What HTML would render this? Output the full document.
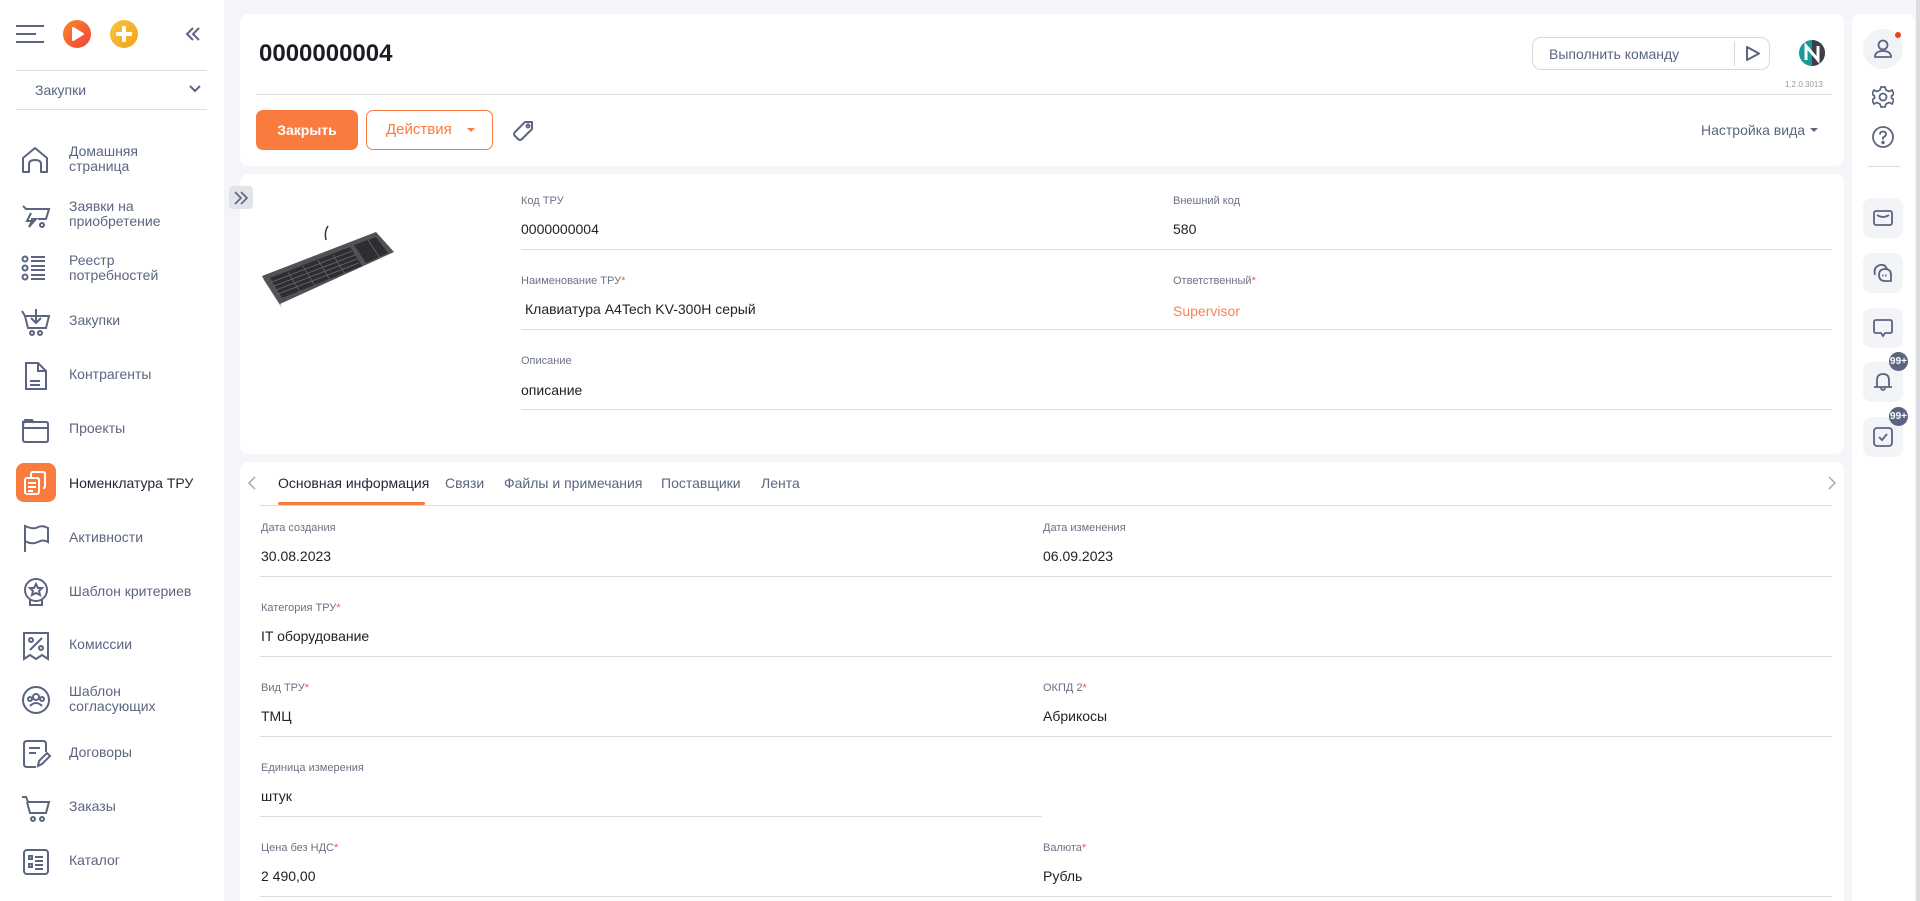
<!DOCTYPE html>
<html><head><meta charset="utf-8"><style>
*{box-sizing:border-box;margin:0;padding:0}
html,body{width:1920px;height:901px;overflow:hidden}
body{background:#f4f5f9;font-family:"Liberation Sans",sans-serif;position:relative;color:#222}
.a{position:absolute}
.side{left:0;top:0;width:224px;height:901px;background:#fff}
.nav{position:absolute;left:0;width:224px;height:44px}
.nav svg{position:absolute;left:20px;top:8px}
.nav .t{position:absolute;left:69px;font-size:14px;color:#5b6580;line-height:15px}
.card{background:#fff;border-radius:8px}
.lbl{position:absolute;font-size:11px;color:#6b7285}
.lbl i{color:#f05a3e;font-style:normal}
.val{position:absolute;font-size:14px;color:#222}
.hl{position:absolute;height:1px;background:#dcdde3}
.rb{position:absolute;left:1863px;width:40px;height:40px;border-radius:9px;background:#f3f4f8}
.rb svg{position:absolute;left:10px;top:10px}
.badge{position:absolute;left:1889px;width:19px;height:19px;border-radius:50%;background:#5b6580;color:#fff;font-size:10px;font-weight:bold;line-height:19px;text-align:center;overflow:hidden}
</style></head><body>
<div class="a side">
 <svg class="a" style="left:16px;top:24px" width="28" height="20"><g stroke="#5b6580" stroke-width="2"><line x1="0" y1="2" x2="28" y2="2"/><line x1="0" y1="10" x2="20" y2="10"/><line x1="0" y1="18" x2="28" y2="18"/></g></svg>
 <div class="a" style="left:63px;top:20px;width:28px;height:28px;border-radius:50%;background:linear-gradient(135deg,#f78a2a,#f2413a)"></div>
 <svg class="a" style="left:71px;top:26px" width="14" height="16"><path d="M2 2 L12 8 L2 14Z" fill="#fff" stroke="#fff" stroke-linejoin="round" stroke-width="2"/></svg>
 <div class="a" style="left:110px;top:20px;width:28px;height:28px;border-radius:50%;background:linear-gradient(135deg,#fbc43c,#f2a21c)"></div>
 <div class="a" style="left:116px;top:32px;width:16px;height:4px;background:#fff;border-radius:1px"></div>
 <div class="a" style="left:122px;top:26px;width:4px;height:16px;background:#fff;border-radius:1px"></div>
 <svg class="a" style="left:185px;top:26px" width="16" height="16"><path d="M8 2 L2 8 L8 14 M14 2 L8 8 L14 14" fill="none" stroke="#5b6580" stroke-width="2"/></svg>
 <div class="hl" style="left:16px;top:70px;width:191px"></div>
 <div class="a" style="left:35px;top:82px;font-size:14px;color:#5b6580">Закупки</div>
 <svg class="a" style="left:188px;top:84px" width="14" height="10"><path d="M2 2 L7 7 L12 2" fill="none" stroke="#5b6580" stroke-width="2"/></svg>
 <div class="hl" style="left:16px;top:109px;width:191px"></div>

 <div class="nav" style="top:136px"><svg width="32" height="32" fill="none" stroke="#5b6580" stroke-width="2"><path d="M3 28 V14 L15 4 L27 14 V28 H21 V20 Q21 16 15 16 Q9 16 9 20 V28 Z" stroke-linejoin="round"/></svg><div class="t" style="top:8px">Домашняя<br>страница</div></div>
 <div class="nav" style="top:191px"><svg width="32" height="32" fill="none" stroke="#5b6580" stroke-width="2"><path d="M3 7 L6 10 H29 L26 20 H18 M11 14 L7 22 H12 L9 28 L16 20 H11"/><circle cx="22" cy="26" r="2"/></svg><div class="t" style="top:8px">Заявки на<br>приобретение</div></div>
 <div class="nav" style="top:245px"><svg width="32" height="32" fill="none" stroke="#5b6580" stroke-width="2"><circle cx="5" cy="6" r="2.5"/><circle cx="5" cy="15" r="2.5"/><circle cx="5" cy="24" r="2.5"/><path d="M11 4H25M11 8H25M11 13H25M11 17H25M11 22H25M11 26H25"/></svg><div class="t" style="top:8px">Реестр<br>потребностей</div></div>
 <div class="nav" style="top:298px"><svg width="32" height="32" fill="none" stroke="#5b6580" stroke-width="2"><path d="M2 5 L5 10 H29 L26 22 H8 L5 10 M16 3 V17 M11 12 L16 17 L21 12"/><circle cx="12" cy="27" r="2"/><circle cx="20" cy="27" r="2"/></svg><div class="t" style="top:15px">Закупки</div></div>
 <div class="nav" style="top:352px"><svg width="32" height="32" fill="none" stroke="#5b6580" stroke-width="2"><path d="M6 3 H18 L26 11 V29 H6 Z M10 21 H20 M10 25 H20 M18 3 V11 H26"/></svg><div class="t" style="top:15px">Контрагенты</div></div>
 <div class="nav" style="top:406px"><svg width="32" height="32" fill="none" stroke="#5b6580" stroke-width="2"><path d="M3 8 H26 Q28 8 28 10 V26 Q28 28 26 28 H6 Q3 28 3 26 Z M3 14 Q3 8 5 6 H12 L14 9"/><path d="M3 14 H28"/></svg><div class="t" style="top:15px">Проекты</div></div>
 <div class="a" style="left:16px;top:463px;width:40px;height:39px;border-radius:8px;background:#f97b3d"></div>
 <svg class="a" style="left:22px;top:469px" width="28" height="28" fill="none" stroke="#fff" stroke-width="2"><rect x="3" y="9" width="14" height="16" rx="2"/><path d="M9 9 V5 Q9 3 11 3 H21 Q23 3 23 5 V17 Q23 19 21 19 M6 14 H14 M6 18 H14 M6 22 H11"/></svg>
 <div class="a" style="left:69px;top:475px;font-size:14px;color:#1f2533">Номенклатура ТРУ</div>
 <div class="nav" style="top:515px"><svg width="32" height="32" fill="none" stroke="#5b6580" stroke-width="2"><path d="M5 29 V3 Q14 7 18 4 Q23 2 28 5 V19 Q23 16 18 19 Q12 22 5 18"/></svg><div class="t" style="top:15px">Активности</div></div>
 <div class="nav" style="top:569px"><svg width="32" height="32" fill="none" stroke="#5b6580" stroke-width="2"><circle cx="16" cy="13" r="11"/><path d="M16 7 L18 11 H22 L19 14 L20 18 L16 16 L12 18 L13 14 L10 11 H14 Z M10 22 V28 H22 V22"/></svg><div class="t" style="top:15px">Шаблон критериев</div></div>
 <div class="nav" style="top:622px"><svg width="32" height="32" fill="none" stroke="#5b6580" stroke-width="2"><path d="M4 3 H28 V29 L22 25 L16 29 L10 25 L4 29 Z M10 20 L22 8"/><circle cx="11" cy="10" r="2"/><circle cx="21" cy="18" r="2"/></svg><div class="t" style="top:15px">Комиссии</div></div>
 <div class="nav" style="top:676px"><svg width="32" height="32" fill="none" stroke="#5b6580" stroke-width="2"><circle cx="16" cy="16" r="13"/><circle cx="16" cy="13" r="3"/><circle cx="10" cy="15" r="2"/><circle cx="22" cy="15" r="2"/><path d="M10 22 Q16 16 22 22"/></svg><div class="t" style="top:8px">Шаблон<br>согласующих</div></div>
 <div class="nav" style="top:730px"><svg width="32" height="32" fill="none" stroke="#5b6580" stroke-width="2"><path d="M26 14 V6 Q26 3 23 3 H7 Q4 3 4 6 V26 Q4 29 7 29 H16 M9 10 H20 M9 15 H16 M18 28 L19 23 L27 15 L30 18 L22 26 Z"/></svg><div class="t" style="top:15px">Договоры</div></div>
 <div class="nav" style="top:784px"><svg width="32" height="32" fill="none" stroke="#5b6580" stroke-width="2"><path d="M2 5 H6 L8 10 H29 L26 21 H10 L7 10"/><circle cx="13" cy="27" r="2"/><circle cx="22" cy="27" r="2"/></svg><div class="t" style="top:15px">Заказы</div></div>
 <div class="nav" style="top:838px"><svg width="32" height="32" fill="none" stroke="#5b6580" stroke-width="2"><rect x="4" y="4" width="24" height="24" rx="3"/><rect x="9" y="10" width="3" height="3"/><rect x="9" y="18" width="3" height="3"/><path d="M15 11 H23 M15 15 H23 M15 19 H23 M15 23 H23"/></svg><div class="t" style="top:15px">Каталог</div></div>
</div>

<!-- header card -->
<div class="a card" style="left:240px;top:14px;width:1604px;height:152px"></div>
<div class="a" style="left:259px;top:40px;font-size:24px;font-weight:bold;color:#1a1d26">0000000004</div>
<div class="hl" style="left:256px;top:94px;width:1576px"></div>
<div class="a" style="left:256px;top:110px;width:102px;height:40px;border-radius:7px;background:#f97b3d;color:#fff;font-size:14px;font-weight:bold;text-align:center;line-height:40px">Закрыть</div>
<div class="a" style="left:366px;top:110px;width:127px;height:40px;border-radius:7px;border:1px solid #f97b3d;color:#f97b3d;font-size:15px;line-height:38px;padding-left:19px">Действия</div>
<div class="a" style="left:467px;top:128px;border-left:4px solid transparent;border-right:4px solid transparent;border-top:4px solid #f97b3d"></div>
<svg class="a" style="left:512px;top:119px" width="24" height="24" fill="none" stroke="#5b6580" stroke-width="2"><path d="M13 3 H20 V10 L10 20 Q8 22 6 20 L3 17 Q1 15 3 13 Z" stroke-linejoin="round"/><circle cx="16" cy="7" r="1.5"/></svg>
<div class="a" style="left:1532px;top:37px;width:238px;height:33px;border:1px solid #d6d8df;border-radius:9px"></div>
<div class="a" style="left:1549px;top:46px;font-size:14px;color:#5b6580">Выполнить команду</div>
<div class="a" style="left:1734px;top:41px;width:1px;height:25px;background:#d6d8df"></div>
<svg class="a" style="left:1745px;top:45px" width="16" height="17"><path d="M2 2 L14 8.5 L2 15Z" fill="none" stroke="#5b6580" stroke-width="2" stroke-linejoin="round"/></svg>
<svg class="a" style="left:1799px;top:40px" width="26" height="26"><circle cx="13" cy="13" r="13" fill="#149c9a"/><path d="M13 0 A13 13 0 0 1 13 26 Z" fill="#3d3f46"/><path d="M7 20 V6 L19 20 V6" fill="none" stroke="#fff" stroke-width="3"/></svg>
<div class="a" style="left:1785px;top:80px;font-size:8px;color:#999">1.2.0.3013</div>
<div class="a" style="left:1701px;top:122px;font-size:14px;color:#5b6580">Настройка вида</div>
<div class="a" style="left:1810px;top:128px;border-left:4px solid transparent;border-right:4px solid transparent;border-top:4px solid #5b6580"></div>

<!-- product card -->
<div class="a card" style="left:240px;top:174px;width:1604px;height:280px"></div>
<div class="a" style="left:229px;top:186px;width:24px;height:23px;border-radius:4px;background:#e2e4ea"></div>
<svg class="a" style="left:232px;top:190px" width="18" height="16"><path d="M3 2 L9 8 L3 14 M9 2 L15 8 L9 14" fill="none" stroke="#5b6580" stroke-width="1.6"/></svg>
<svg class="a" style="left:258px;top:218px" width="140" height="92">
 <path d="M68 22 Q66 14 70 8" fill="none" stroke="#333" stroke-width="1.5"/>
 <path d="M4 58 L118 14 L136 34 L22 86 Z" fill="#505257"/>
 <path d="M4 58 L22 86 L24 90 L6 62Z" fill="#333"/>
 <path d="M12 60 L92 29 L104 48 L24 80 Z" fill="#2d2e31"/>
 <path d="M96 27 L118 19 L130 35 L108 45 Z" fill="#2d2e31"/>
 <g stroke="#6c6e73" stroke-width=".7"><path d="M14 64 L94 33 M16 68 L97 37 M18 72 L99 41 M20 76 L101 45"/><path d="M30 54 L42 74 M45 48 L57 68 M60 42 L72 62 M75 37 L87 56 M110 22 L122 40"/></g>
</svg>
<div class="lbl" style="left:521px;top:195px">Код ТРУ</div>
<div class="val" style="left:521px;top:221px">0000000004</div>
<div class="lbl" style="left:1173px;top:195px">Внешний код</div>
<div class="val" style="left:1173px;top:221px">580</div>
<div class="hl" style="left:521px;top:249px;width:1311px"></div>
<div class="lbl" style="left:521px;top:275px">Наименование ТРУ<i>*</i></div>
<div class="val" style="left:525px;top:301px">Клавиатура A4Tech KV-300H серый</div>
<div class="lbl" style="left:1173px;top:275px">Ответственный<i>*</i></div>
<div class="val" style="left:1173px;top:303px;color:#f7845a">Supervisor</div>
<div class="hl" style="left:521px;top:329px;width:1311px"></div>
<div class="lbl" style="left:521px;top:355px">Описание</div>
<div class="val" style="left:521px;top:382px">описание</div>
<div class="hl" style="left:521px;top:409px;width:1311px"></div>

<!-- tabs card -->
<div class="a card" style="left:240px;top:462px;width:1604px;height:439px;border-radius:8px 8px 0 0"></div>
<svg class="a" style="left:246px;top:475px" width="12" height="16"><path d="M9 2 L3 8 L9 14" fill="none" stroke="#aaa" stroke-width="1.5"/></svg>
<svg class="a" style="left:1826px;top:475px" width="12" height="16"><path d="M3 2 L9 8 L3 14" fill="none" stroke="#aaa" stroke-width="1.5"/></svg>
<div class="a" style="left:278px;top:475px;font-size:14px;color:#1f2533">Основная информация</div>
<div class="a" style="left:445px;top:475px;font-size:14px;color:#5b6580">Связи</div>
<div class="a" style="left:504px;top:475px;font-size:14px;color:#5b6580">Файлы и примечания</div>
<div class="a" style="left:661px;top:475px;font-size:14px;color:#5b6580">Поставщики</div>
<div class="a" style="left:761px;top:475px;font-size:14px;color:#5b6580">Лента</div>
<div class="hl" style="left:260px;top:505px;width:1572px"></div>
<div class="a" style="left:278px;top:502px;width:147px;height:3px;border-radius:2px;background:#f97b3d"></div>

<div class="lbl" style="left:261px;top:522px">Дата создания</div>
<div class="val" style="left:261px;top:548px">30.08.2023</div>
<div class="lbl" style="left:1043px;top:522px">Дата изменения</div>
<div class="val" style="left:1043px;top:548px">06.09.2023</div>
<div class="hl" style="left:260px;top:576px;width:1572px"></div>
<div class="lbl" style="left:261px;top:602px">Категория ТРУ<i>*</i></div>
<div class="val" style="left:261px;top:628px">IT оборудование</div>
<div class="hl" style="left:260px;top:656px;width:1572px"></div>
<div class="lbl" style="left:261px;top:682px">Вид ТРУ<i>*</i></div>
<div class="val" style="left:261px;top:708px">ТМЦ</div>
<div class="lbl" style="left:1043px;top:682px">ОКПД 2<i>*</i></div>
<div class="val" style="left:1043px;top:708px">Абрикосы</div>
<div class="hl" style="left:260px;top:736px;width:1572px"></div>
<div class="lbl" style="left:261px;top:762px">Единица измерения</div>
<div class="val" style="left:261px;top:788px">штук</div>
<div class="hl" style="left:260px;top:816px;width:782px"></div>
<div class="lbl" style="left:261px;top:842px">Цена без НДС<i>*</i></div>
<div class="val" style="left:261px;top:868px">2 490,00</div>
<div class="lbl" style="left:1043px;top:842px">Валюта<i>*</i></div>
<div class="val" style="left:1043px;top:868px">Рубль</div>
<div class="hl" style="left:260px;top:896px;width:1572px"></div>

<!-- right panel -->
<div class="a card" style="left:1852px;top:14px;width:63px;height:887px;border-radius:8px 8px 0 0"></div>
<div class="a" style="left:1916px;top:0;width:4px;height:901px;background:#dcdde3"></div>
<div class="a" style="left:1863px;top:29px;width:40px;height:40px;border-radius:50%;background:#f1f3f7"></div>
<div class="a" style="left:1895px;top:32px;width:6px;height:6px;border-radius:50%;background:#f2411f"></div>
<svg class="a" style="left:1873px;top:39px" width="20" height="20" fill="none" stroke="#5b6580" stroke-width="1.8"><circle cx="10" cy="6" r="4.5"/><path d="M2 18 Q2 12 10 12 Q18 12 18 18 Z"/></svg>
<svg class="a" style="left:1872px;top:86px" width="22" height="22" fill="none" stroke="#5b6580" stroke-width="1.8"><circle cx="11" cy="11" r="3.5"/><path d="M9 1 H13 L14 4 L17 5.5 L20 4 L22 8 L19.5 10 V12 L22 14 L20 18 L17 16.5 L14 18 L13 21 H9 L8 18 L5 16.5 L2 18 L0 14 L2.5 12 V10 L0 8 L2 4 L5 5.5 L8 4 Z" stroke-linejoin="round"/></svg>
<svg class="a" style="left:1872px;top:126px" width="22" height="22" fill="none" stroke="#5b6580" stroke-width="1.8"><circle cx="11" cy="11" r="10"/><path d="M8 8.5 Q8 5.5 11 5.5 Q14 5.5 14 8.3 Q14 10 11 11.5 V13.5"/><circle cx="11" cy="16.5" r=".8" fill="#5b6580"/></svg>
<div class="hl" style="left:1868px;top:166px;width:32px"></div>
<div class="rb" style="top:198px"><svg width="20" height="20" fill="none" stroke="#5b6580" stroke-width="1.8"><rect x="1" y="3" width="18" height="14" rx="2"/><path d="M4 7 Q10 11 16 7"/></svg></div>
<div class="rb" style="top:253px"><svg width="20" height="20" fill="none" stroke="#5b6580" stroke-width="1.8"><path d="M2 12 Q0 4 7 2 Q12 1 14 6"/><path d="M6 12 Q6 6 12 6 Q18 6 18 12 V18 H12 Q6 18 6 12"/><path d="M9 12.5 H15" stroke-dasharray="1.5 1.5"/></svg></div>
<div class="rb" style="top:308px"><svg width="20" height="20" fill="none" stroke="#5b6580" stroke-width="1.8"><path d="M3 2 H17 Q19 2 19 4 V13 Q19 15 17 15 H12 L10 18 L8 15 H3 Q1 15 1 13 V4 Q1 2 3 2Z"/></svg></div>
<div class="rb" style="top:362px"><svg width="20" height="20" fill="none" stroke="#5b6580" stroke-width="1.8"><path d="M4 15 V8 Q4 2 10 2 Q16 2 16 8 V15 H1 H19 M8 15 Q8 18 10 18 Q12 18 12 15"/></svg></div>
<div class="badge" style="top:352px">99+</div>
<div class="rb" style="top:417px"><svg width="20" height="20" fill="none" stroke="#5b6580" stroke-width="1.8"><rect x="1" y="1" width="18" height="18" rx="3"/><path d="M6 10 L9 13 L14 7"/></svg></div>
<div class="badge" style="top:407px">99+</div>
</body></html>
